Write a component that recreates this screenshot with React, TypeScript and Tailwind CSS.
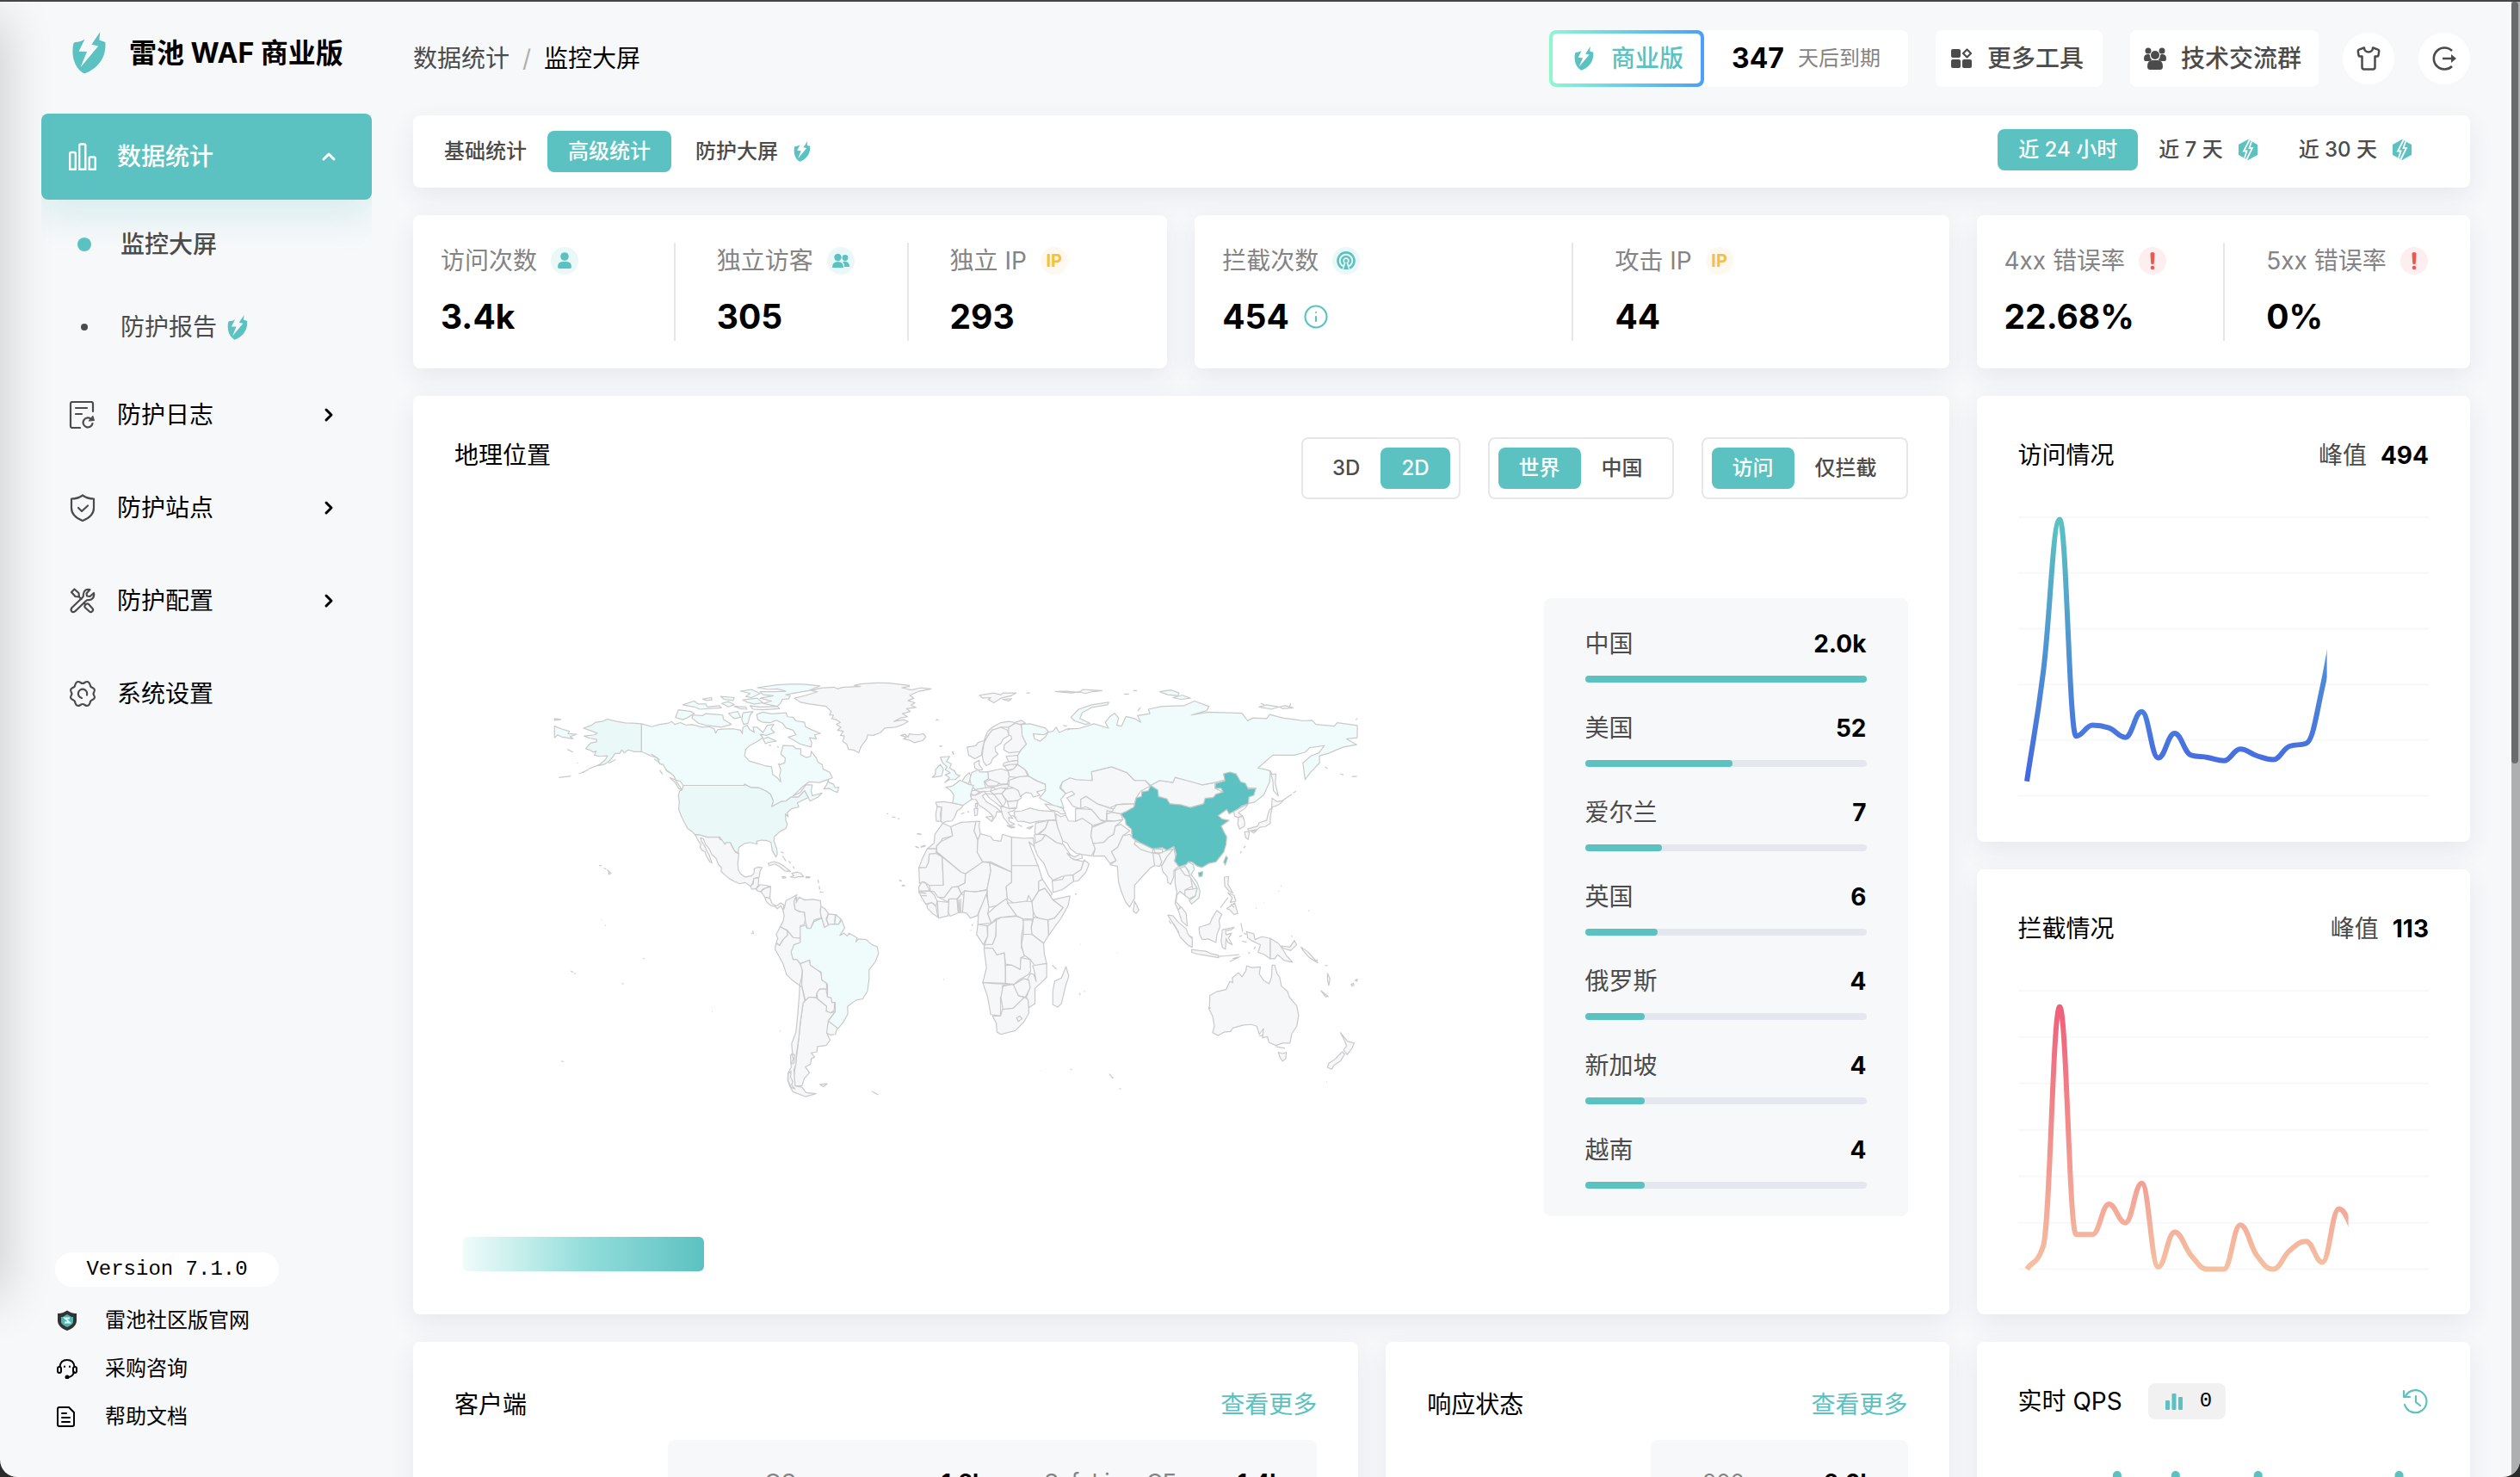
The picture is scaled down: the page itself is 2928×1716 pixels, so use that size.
import { ReactNode, useId } from "react";
import clsx from "clsx";
import { ChevronRight, ChevronUp, Info, Shirt } from "lucide-react";

const COUNTRIES = [
  { name: "中国", value: "2.0k", percent: 100 },
  { name: "美国", value: "52", percent: 52.3 },
  { name: "爱尔兰", value: "7", percent: 27.5 },
  { name: "英国", value: "6", percent: 25.7 },
  { name: "俄罗斯", value: "4", percent: 21.4 },
  { name: "新加坡", value: "4", percent: 21.4 },
  { name: "越南", value: "4", percent: 21.4 },
];

const VISITS = [26, 222, 496, 107, 127, 122, 105, 151, 68, 112, 73, 69, 63, 84, 72, 65, 89, 94, 195, 360];
const BLOCKS = [0, 10, 113, 15, 15, 28, 20, 37, 1, 16, 6, 0, 0, 19, 6, 0, 8, 12, 3, 26, 15];

export default function App() {
  return (
    <div className="relative h-screen overflow-hidden border-t-2 border-[#454545] bg-[#2b2b2b] font-['Inter','Noto_Sans_CJK_SC',sans-serif] text-[28px] leading-[42px] text-black">
      <div className="relative flex h-full overflow-hidden rounded-b-[20px] bg-[#f7f8fa]">
        <Sidebar />
        <main className="min-w-0 flex-1 pr-[58px]">
          <Header />
          <FilterBar />
          <Dashboard />
        </main>
        <div className="pointer-events-none absolute top-5 bottom-[210px] -left-10 w-10 shadow-[0_0_60px_rgba(0,0,0,0.24)]" />
        <div className="absolute inset-y-0 right-0 w-[10px] bg-[#afafaf]">
          <div className="h-[885px] w-2 rounded-full bg-[#6b6b6b]" />
        </div>
      </div>
    </div>
  );
}

function Sidebar() {
  return (
    <aside className="flex w-[480px] shrink-0 flex-col px-12">
      <div className="flex h-[130px] items-start gap-[27px] pt-[35px] pl-9">
        <Logo className="h-[49px] w-[39px]" />
        <h1 className="text-[32px] leading-[50px] font-bold whitespace-nowrap">雷池 WAF 商业版</h1>
      </div>
      <nav className="flex flex-col">
        <div className="overflow-hidden pb-1">
          <button className="flex h-[100px] w-full items-center rounded-lg bg-[#5bc2c1] pr-[38px] pl-8 font-medium text-white shadow-[0_20px_40px_rgba(91,194,193,0.2)]">
            <BarsIcon className="h-8 w-8" />
            <span className="ml-6">数据统计</span>
            <ChevronUp className="ml-auto h-6 w-6" strokeWidth={3} />
          </button>
          <ul className="pt-1 text-[#4b4b4b]">
            <li className="flex h-24 items-center">
              <span className="ml-[42px] h-4 w-4 rounded-full bg-[#5bc2c1]" />
              <a href="#screen" className="ml-[34px] font-medium">
                监控大屏
              </a>
            </li>
            <li className="flex h-24 items-center">
              <span className="ml-[46px] h-2 w-2 rounded-full bg-[#4b4b4b]" />
              <a href="#report" className="ml-[38px]">
                防护报告
              </a>
              <Logo className="ml-3 h-[29px] w-6" />
            </li>
          </ul>
        </div>
        <NavItem icon={<LogIcon />} label="防护日志" />
        <NavItem icon={<ShieldIcon />} label="防护站点" />
        <NavItem icon={<ConfigIcon />} label="防护配置" />
        <NavItem icon={<GearIcon />} label="系统设置" leaf />
      </nav>
      <div className="mt-auto mb-[42px] px-4">
        <div className="w-[260px] rounded-full bg-white text-center font-['Liberation_Mono','Noto_Sans_CJK_SC',monospace] text-2xl leading-10">
          Version 7.1.0
        </div>
        <ul className="mt-[11px] text-2xl">
          <FootLink icon={<BadgeIcon />} label="雷池社区版官网" />
          <FootLink icon={<HeadsetIcon />} label="采购咨询" />
          <FootLink icon={<DocIcon />} label="帮助文档" />
        </ul>
      </div>
    </aside>
  );
}

function NavItem({ icon, label, leaf }: { icon: ReactNode; label: string; leaf?: boolean }) {
  return (
    <button className="mb-2 flex h-[100px] items-center pr-[38px] pl-8">
      <span className="text-[#4b4b4b]">{icon}</span>
      <span className="ml-6">{label}</span>
      {!leaf && <ChevronRight className="ml-auto h-6 w-6" strokeWidth={3} />}
    </button>
  );
}

function FootLink({ icon, label }: { icon: ReactNode; label: string }) {
  return (
    <li>
      <a href="#link" className="flex h-14 items-center gap-8 pl-[2px]">
        {icon}
        {label}
      </a>
    </li>
  );
}

function Header() {
  return (
    <header className="flex h-[132px] items-center justify-between">
      <div className="flex gap-[15px]">
        <a href="#stats" className="text-[#4b4b4b]">
          数据统计
        </a>
        <span className="text-[#b0b0b0]">/</span>
        <span>监控大屏</span>
      </div>
      <div className="flex items-center gap-8">
        <div className="flex h-[66px] items-center rounded-lg bg-white">
          <div className="h-full rounded-lg bg-gradient-to-r from-[#8ff7cf] to-[#4b9ffa] p-1">
            <div className="flex h-full items-center gap-5 rounded-[5px] bg-white px-5 pl-[25px] font-medium text-[#5bc2c1]">
              <Logo className="h-7 w-[23px]" />
              商业版
            </div>
          </div>
          <b className="ml-8 text-[32px]">347</b>
          <span className="mr-8 ml-4 text-2xl text-[#848484]">天后到期</span>
        </div>
        <button className="flex h-[66px] items-center gap-[18px] rounded-lg bg-white pr-[22px] pl-[18px] font-medium text-[#4b4b4b]">
          <ToolsIcon />
          更多工具
        </button>
        <div className="flex items-center gap-7">
          <button className="flex h-[66px] items-center gap-[17px] rounded-lg bg-white pr-5 pl-4 font-medium text-[#4b4b4b]">
            <GroupIcon />
            技术交流群
          </button>
          <button aria-label="主题" className="grid h-[60px] w-[60px] place-items-center rounded-full bg-white text-[#4b4b4b]">
            <Shirt className="h-[30px] w-[30px]" strokeWidth={2} />
          </button>
          <button aria-label="退出" className="grid h-[60px] w-[60px] place-items-center rounded-full bg-white text-[#4b4b4b]">
            <svg viewBox="0 0 30 30" className="h-[30px] w-[30px]" fill="none" stroke="currentColor" strokeWidth="2.600">
              <path d="M24 6A12.500 12.500 0 1 0 24 24" />
              <path d="M13 15h13" />
              <path d="M23 10l6 5-6 5z" fill="currentColor" stroke="none" />
            </svg>
          </button>
        </div>
      </div>
    </header>
  );
}

function Card({ className, children }: { className?: string; children: ReactNode }) {
  return (
    <section className={clsx("rounded-lg bg-white shadow-[0_10px_30px_rgba(30,50,90,0.08)]", className)}>{children}</section>
  );
}

function Tab({ active, children }: { active?: boolean; children: ReactNode }) {
  return (
    <button
      className={clsx(
        "flex h-12 items-center gap-[18px] rounded-lg px-6 text-2xl font-medium",
        active ? "bg-[#5bc2c1] text-white" : "text-[#4b4b4b]"
      )}
    >
      {children}
    </button>
  );
}

function FilterBar() {
  return (
    <Card className="mb-8 flex h-[84px] items-center justify-between pr-11 pl-3">
      <div className="flex">
        <Tab>基础统计</Tab>
        <Tab active>高级统计</Tab>
        <div className="ml-1">
          <Tab>
            防护大屏
            <Logo className="h-6 w-5" />
          </Tab>
        </div>
      </div>
      <div className="flex pb-1">
        <Tab active>近 24 小时</Tab>
        <Tab>
          近 7 天<HexIcon />
        </Tab>
        <Tab>
          近 30 天<HexIcon />
        </Tab>
      </div>
    </Card>
  );
}

function Stat({ label, value, icon, extra, first }: { label: string; value: string; icon: ReactNode; extra?: ReactNode; first?: boolean }) {
  return (
    <div className={clsx(!first && "border-l-2 border-[#e6e7eb] pl-12")}>
      <div className="flex items-center gap-4 whitespace-nowrap text-[#848484]">
        {label}
        {icon}
      </div>
      <div className="mt-4 flex items-center gap-4 text-[39px] leading-14 font-bold">
        {value}
        {extra}
      </div>
    </div>
  );
}

function Dashboard() {
  return (
    <div className="grid grid-cols-12 gap-8">
      <div className="col-span-9 grid grid-cols-2 gap-8">
        <Card className="grid grid-cols-3 p-8">
          <Stat first label="访问次数" value="3.4k" icon={<UserBadge />} />
          <Stat label="独立访客" value="305" icon={<UsersBadge />} />
          <Stat label="独立 IP" value="293" icon={<IpBadge />} />
        </Card>
        <Card className="grid grid-cols-2 p-8">
          <Stat first label="拦截次数" value="454" icon={<TargetBadge />} extra={<Info className="h-[30px] w-[30px] text-[#5bc2c1]" strokeWidth={1.7} />} />
          <Stat label="攻击 IP" value="44" icon={<IpBadge />} />
        </Card>
      </div>
      <Card className="col-span-3 grid grid-cols-2 p-8">
        <Stat first label="4xx 错误率" value="22.68%" icon={<AlertBadge />} />
        <Stat label="5xx 错误率" value="0%" icon={<AlertBadge />} />
      </Card>

      <GeoCard />
      <div className="col-span-3 flex flex-col gap-8">
        <TrendCard title="访问情况" peak="494" data={VISITS} max={500} lines={5} reveal={359} colors={["#5bc3c1", "#4361e6"]} />
        <TrendCard title="拦截情况" peak="113" data={BLOCKS} max={120} lines={6} reveal={384} colors={["#ee5a78", "#f5c0a2"]} />
      </div>

      <div className="col-span-9 grid grid-cols-[1098fr_654fr] gap-8">
        <Card className="px-12 pt-[52px]">
          <CardHead title="客户端" />
          <div className="mt-5 ml-[248px] grid grid-cols-[329fr_297fr] gap-12 rounded-lg bg-[#f7f8fa] px-10 pt-7 whitespace-nowrap">
            <Row name="macOS" value="1.2k" />
            <Row name="SafeLine-CE" value="1.4k" />
          </div>
        </Card>
        <Card className="px-12 pt-[52px]">
          <CardHead title="响应状态" />
          <div className="mt-5 ml-[260px] rounded-lg bg-[#f7f8fa] px-10 pt-7">
            <Row name="200" value="2.0k" />
          </div>
        </Card>
      </div>
      <Card className="col-span-3 px-12 pt-12">
        <div className="flex items-center">
          <h2>实时 QPS</h2>
          <div className="ml-[30px] flex h-[42px] items-center gap-5 rounded-lg bg-[#f1f1f1] px-4 pl-5 font-['Liberation_Mono','Noto_Sans_CJK_SC',monospace] text-2xl">
            <svg viewBox="0 0 20 20" className="h-5 w-5" fill="#5bc2c1">
              <rect x="0" y="9" width="5" height="11" rx="1" />
              <rect x="7.500" y="1" width="5" height="19" rx="1" />
              <rect x="15" y="5" width="5" height="15" rx="1" />
            </svg>
            0
          </div>
          <button aria-label="历史" className="ml-auto text-[#5bc2c1]">
            <HistoryIcon />
          </button>
        </div>
        <svg viewBox="0 0 478 120" className="mt-[60px] w-full" fill="#5bc2c1">
          {[110, 178, 274, 438].map((x) => (
            <rect key={x} x={x} y="0" width="10" height="120" rx="5" />
          ))}
        </svg>
      </Card>
    </div>
  );
}

function CardHead({ title }: { title: string }) {
  return (
    <div className="flex justify-between">
      <h2>{title}</h2>
      <a href="#more" className="text-[#5bc2c1]">
        查看更多
      </a>
    </div>
  );
}

function Row({ name, value }: { name: string; value: string }) {
  return (
    <div className="flex items-center text-[26px]">
      <span className="mr-3 h-2 w-2 rounded-full bg-[#5bc2c1]" />
      <span className="text-[#848484]">{name}</span>
      <b className="ml-auto">{value}</b>
    </div>
  );
}

function Toggle({ options, active }: { options: string[]; active: string }) {
  return (
    <div className="flex rounded-lg border-2 border-[#e5e7ed] p-[10px]">
      {options.map((option) => (
        <Tab key={option} active={option === active}>
          {option}
        </Tab>
      ))}
    </div>
  );
}

function GeoCard() {
  return (
    <Card className="col-span-9 flex flex-col px-12 pt-12">
      <div className="flex items-start justify-between">
        <h2>地理位置</h2>
        <div className="flex gap-8">
          <Toggle options={["3D", "2D"]} active="2D" />
          <Toggle options={["世界", "中国"]} active="世界" />
          <Toggle options={["访问", "仅拦截"]} active="访问" />
        </div>
      </div>
      <div className="flex flex-1 items-stretch gap-[100px]">
        <div className="relative flex flex-1 items-center">
          <WorldMap />
          <div className="absolute bottom-[50px] left-[10px] h-10 w-[280px] rounded-md bg-gradient-to-r from-[#effcfb] via-[#93dedb] to-[#5bc2c1]" />
        </div>
        <ul className="flex w-[423px] flex-col gap-8 self-center rounded-lg bg-[#f7f8fa] px-12 py-8">
          {COUNTRIES.map(({ name, value, percent }) => (
            <li key={name}>
              <div className="flex justify-between">
                <span className="text-[#4b4b4b]">{name}</span>
                <b>{value}</b>
              </div>
              <div className="mt-4 h-2 rounded-full bg-[#e4e7ed]">
                <div className="h-2 rounded-full bg-[#5bc2c1]" style={{ width: `${percent}%` }} />
              </div>
            </li>
          ))}
        </ul>
      </div>
    </Card>
  );
}

// monotone cubic through evenly spaced points
function smoothPath(points: number[][]) {
  const slopes = points.slice(1).map(([x, y], i) => (y - points[i][1]) / (x - points[i][0]));
  const tangents = points.map((_, i) => {
    const a = slopes[i - 1] ?? slopes[i];
    const b = slopes[i] ?? a;
    if (a * b <= 0) return 0;
    const steepest = 2 * Math.min(Math.abs(a), Math.abs(b));
    return Math.sign(a) * Math.min(Math.abs(a + b) / 2, steepest);
  });
  return points.reduce((d, [x, y], i) => {
    if (i === 0) return `M${x},${y}`;
    const [px, py] = points[i - 1];
    const h = (x - px) * 0.42;
    return `${d}C${px + h},${py + tangents[i - 1] * h} ${x - h},${y - tangents[i] * h} ${x},${y}`;
  }, "");
}

type TrendProps = {
  title: string;
  peak: string;
  data: number[];
  max: number;
  lines: number;
  reveal: number;
  colors: string[];
};

function TrendCard({ title, peak, data, max, lines, reveal, colors }: TrendProps) {
  const id = useId();
  const points = data.map((v, i) => [10 + i * 19.1, 375 - (v / max) * 324]);

  return (
    <Card className="p-12">
      <div className="flex">
        <h2 className="mr-auto">{title}</h2>
        <span className="text-[#4b4b4b]">峰值</span>
        <b className="ml-4">{peak}</b>
      </div>
      <svg viewBox="0 0 478 380" className="w-full">
        <defs>
          <linearGradient id={`${id}g`} gradientUnits="userSpaceOnUse" x1="0" y1="51" x2="0" y2="375">
            <stop stopColor={colors[0]} />
            <stop offset="1" stopColor={colors[1]} />
          </linearGradient>
          <clipPath id={`${id}c`}>
            <rect width={reveal} height="380" />
          </clipPath>
        </defs>
        {Array.from({ length: lines + 1 }, (_, i) => (
          <path key={i} d={`M0 ${51 + (i * 324) / lines}h478`} stroke="#f7f8fa" strokeWidth="2" />
        ))}
        <path d={smoothPath(points)} fill="none" stroke={`url(#${id}g)`} strokeWidth="6" clipPath={`url(#${id}c)`} />
      </svg>
    </Card>
  );
}

/* ---------- map ---------- */

const WEST_PLAIN = [
  // Mexico, Central America, Caribbean
  "M562,590L580,592 608,600 645,598 650,608 660,610 667,624 672,618 686,618 692,632 704,652 716,656 712,690 714,712 722,726 738,737 760,733 768,725 770,708 782,703 797,704 790,716 787,738 768,742 766,752 758,770 738,756 718,760 700,752 682,742 668,730 654,718 655,704 645,695 636,672 622,660 612,640 600,625 592,606 582,602 586,614 595,628 602,642 612,660 618,678 622,688 614,684 602,664 598,650 588,645 580,634 584,624 574,612 566,596Z",
  "M768,742L785,740 784,764 776,778 760,778 757,768 766,760Z",
  "M776,778L790,763 812,766 826,770 800,778 792,788 780,784Z",
  "M792,788L806,776 827,770 824,810 806,806 798,794Z",
  "M806,806L824,810 832,828 846,836 862,826 874,834 870,850 862,836 850,846 842,838 828,836 812,822Z",
  "M818,690L838,684 858,690 876,702 896,718 876,716 862,704 842,692 822,698Z",
  "M900,724L920,720 932,724 942,736 922,736 912,740 896,736 908,732Z",
  "M866,736L876,735 880,739 870,741Z",
  "M950,736L964,737 960,740 950,740Z",
  // South America
  "M875,842L880,818 900,808 918,798 908,820 912,848 926,856 945,858 948,880 944,900 930,905 934,930 928,948 905,945 885,920 860,908 870,890 874,870 870,852Z",
  "M908,820L918,806 916,826 926,806 945,816 975,814 1000,818 1002,836 1000,850 1002,870 1005,878 985,882 978,885 966,914 954,912 948,890 945,858 930,856 912,848Z",
  "M1002,838L1015,845 1028,862 1020,882 1030,905 1014,910 1005,880 1000,860Z",
  "M1028,864L1052,866 1050,898 1030,902 1022,885Z",
  "M860,908L885,922 885,938 870,952 858,972 846,962 852,948 846,935Z",
  "M885,922L905,945 930,948 930,965 910,970 900,995 905,1020 918,1020 930,1035 938,1050 935,1080 928,1110 905,1094 882,1072 870,1035 855,1008 842,985 845,966 858,972 870,952 885,938Z",
  "M930,1035L960,1022 968,1042 985,1052 1003,1068 1005,1090 1022,1102 1022,1122 998,1122 988,1136 985,1152 960,1150 948,1162 940,1130 935,1108 938,1060Z",
  "M988,1136L998,1122 1020,1122 1025,1150 1038,1152 1050,1172 1048,1196 1036,1204 1020,1198 1022,1182 990,1156Z",
  "M1028,1230L1045,1242 1060,1256 1052,1278 1036,1280 1020,1272Z",
  "M948,1162L960,1150 985,1152 1022,1182 1020,1198 1036,1204 1052,1200 1028,1230 1022,1272 1034,1298 1020,1316 990,1320 988,1338 968,1342 980,1356 968,1362 966,1380 948,1390 962,1410 944,1430 936,1455 912,1455 908,1420 918,1350 925,1290 930,1240 940,1170Z",
  "M928,1110L936,1116 946,1162 940,1170 930,1240 925,1290 916,1350 915,1380 908,1400 912,1455 936,1460 950,1478 985,1482 948,1492 905,1476 894,1458 886,1435 888,1410 898,1392 896,1350 903,1345 900,1310 915,1270 922,1200 926,1150Z",
  "M900,1345L910,1348 908,1378 898,1380 906,1362Z",
  "M888,1412L898,1405 896,1425 904,1440 900,1452 912,1466 898,1460 888,1438Z",
  // Greenland and Iceland
  "M1310,78L1240,70 1200,69 1140,73 1118,78 1140,82 1080,84 1060,90 1048,84 1000,87 968,96 990,100 950,112 910,122 930,136 962,142 1020,150 1038,168 1032,180 1046,180 1040,192 1055,196 1070,205 1056,212 1072,222 1060,232 1080,236 1070,250 1084,252 1078,270 1092,280 1098,298 1116,300 1134,310 1142,288 1162,262 1165,248 1184,250 1210,240 1225,225 1262,222 1290,212 1306,202 1292,196 1256,202 1280,190 1304,186 1286,175 1314,168 1300,158 1334,154 1316,146 1330,138 1306,130 1326,122 1312,112 1345,98 1386,90 1350,86 1318,94 1284,86 1310,82Z",
  "M1280,250L1300,256 1290,262 1310,266 1328,275 1356,268 1368,256 1360,244 1340,248 1310,245 1306,256 1296,246Z",
  "M998,1450L1024,1448 1010,1458Z",
];

const WEST_LIGHT = [
  // Canada
  "M376,210L412,220 440,212 470,208 482,202 492,212 512,206 530,214 555,213 588,222 612,220 630,228 635,242 642,230 668,228 700,228 722,232 728,244 730,222 745,215 752,228 770,240 765,222 780,222 800,240 815,215 838,212 828,228 840,240 812,250 790,246 800,258 775,274 752,286 740,298 736,320 752,338 780,346 806,354 830,358 834,384 850,396 862,410 858,388 862,368 856,352 876,344 878,328 862,314 870,285 905,286 916,296 932,296 932,316 950,326 966,322 968,305 985,326 992,342 1006,350 1010,366 1032,376 1042,396 1020,404 998,412 960,410 940,425 905,458 930,446 950,420 972,420 968,440 972,458 1006,448 992,462 964,476 958,464 945,440 924,462 898,462 880,476 862,478 830,495 836,475 826,452 812,442 785,430 760,430 735,418 735,422 522,422 512,408 496,404 490,390 478,380 464,372 452,350 440,348 430,326 412,322 400,316 376,306Z",
  "M1028,402L1022,420 1012,434 1032,432 1048,442 1060,446 1064,428 1052,430 1046,418 1030,412Z",
  "M476,396L494,402 518,438 506,432 494,412Z",
  // Arctic archipelago
  "M998,80L940,74 890,74 850,76 780,86 820,92 850,90 880,98 840,100 790,100 800,110 836,114 790,122 830,132 800,140 850,150 862,138 868,126 890,124 895,114 880,110 908,105 960,96Z",
  "M722,98L760,92 790,106 760,120 740,116 755,106Z",
  "M730,128L780,122 800,138 770,142 745,136Z",
  "M755,148L790,152 850,150 858,158 800,162 765,160Z",
  "M555,180L590,182 600,175 640,178 660,180 662,195 690,212 655,222 600,215 575,208 552,190Z",
  "M505,162L550,168 560,175 535,190 520,196 495,188Z",
  "M778,178L800,170 830,176 880,172 886,186 905,188 915,200 945,205 948,220 968,230 1000,243 980,248 986,262 962,258 970,275 968,290 930,280 900,262 888,256 915,248 905,232 880,224 868,208 846,198 826,206 800,205 782,196Z",
  "M520,145L560,132 574,142 600,142 606,152 648,148 655,155 580,160 560,152Z",
  "M590,125L620,120 622,128 604,130Z",
  "M652,116L700,120 696,130 664,126Z",
  "M656,140L680,134 700,144 680,152Z",
  "M680,174L712,168 722,188 700,192 690,184Z",
  "M730,172L765,168 755,180 748,208 732,212 726,195Z",
  "M700,150L740,152 744,160 720,158Z",
  "M800,262L818,256 846,270 820,274 808,278Z",
  // French Guiana, Brazil
  "M1054,866L1072,882 1064,900 1050,898Z",
  "M930,908L948,903 954,914 966,914 978,890 1005,878 1014,910 1032,900 1064,900 1074,884 1085,912 1068,938 1082,930 1094,940 1100,930 1128,946 1124,960 1132,950 1160,952 1180,970 1198,976 1203,1000 1192,1028 1170,1056 1170,1090 1164,1130 1148,1156 1125,1160 1095,1182 1096,1208 1080,1236 1062,1258 1028,1232 1052,1200 1052,1168 1040,1168 1038,1152 1025,1150 1025,1105 1005,1090 1003,1064 985,1054 965,1040 963,1022 930,1035 918,1020 905,1020 898,995 908,970 930,962Z",
  // Chukotka past the date line
  "M73,218L98,228 125,236 120,244 150,246 128,254 138,262 100,256 84,248 73,258Z",
  "M73,192L95,195 73,198Z",
];

const USA = [
  "M376,210L345,208 320,207 290,202 257,194 240,202 216,205 200,216 174,225 205,236 222,242 212,248 176,252 196,260 220,264 220,272 200,276 186,290 182,296 200,302 208,308 218,304 212,318 230,322 258,320 250,334 230,350 192,365 222,354 246,350 262,340 276,324 284,312 300,312 308,300 316,310 330,300 352,306 376,306Z",
  "M522,422L735,422 735,418 760,430 785,430 812,442 826,452 836,475 830,495 862,478 880,476 898,462 924,462 945,440 958,464 944,470 920,482 925,496 900,502 884,516 888,530 878,520 880,545 885,555 880,570 860,580 840,598 838,612 848,640 850,658 845,668 832,645 828,618 815,612 795,610 778,614 780,624 755,618 735,622 716,635 713,656 700,645 686,618 672,618 667,624 650,600 608,600 580,592 562,590 554,582 537,570 524,546 512,520 506,505 508,480 505,455 510,440 518,438Z",
  "M262,716L270,724 262,728Z",
];

const EAST_PLAIN = [
  // Nordics
  "M235,290L262,286 272,274 290,268 302,236 320,220 345,206 372,202 390,206 412,198 425,208 408,212 392,208 370,222 345,222 330,230 316,232 300,256 290,275 284,300 282,318 260,330 240,318Z",
  "M316,232L345,222 366,232 372,250 352,262 346,276 326,290 328,305 336,314 318,330 312,346 298,354 288,340 284,318 290,275 300,256Z",
  "M370,222L392,208 410,214 416,235 414,250 428,280 405,306 372,310 355,300 356,282 380,262 378,252 370,248Z",
  "M258,345L275,335 274,350 286,368 272,370 260,362Z",
  // Central and eastern Europe
  "M362,322L400,318 404,336 370,340Z",
  "M355,345L370,340 404,336 398,350 370,358 352,354Z",
  "M356,355L376,350 398,350 386,366 366,370Z",
  "M368,372L386,366 400,350 424,368 432,388 410,396 372,392Z",
  "M303,375L345,365 368,372 372,392 366,416 345,418 320,408 303,398Z",
  "M293,410L310,402 340,414 330,424 302,424Z",
  "M260,436L296,430 318,428 310,442 280,444 262,442Z",
  "M318,428L345,420 372,418 366,430 345,432 330,436Z",
  "M310,442L345,430 362,434 348,450 322,452Z",
  "M228,392L242,378 248,392 240,416 218,408Z",
  "M246,442L262,438 276,444 262,456 246,452Z",
  "M246,456L262,456 290,442 296,450 284,458 298,478 330,498 348,515 332,512 328,528 318,542 316,524 300,508 274,490 264,470 250,470Z",
  "M296,530L320,528 316,546Z",
  "M258,502L270,500 268,524 260,526Z",
  "M262,484L268,482 268,498 262,496Z",
  "M296,450L322,452 340,462 350,490 344,496 326,480 308,466Z",
  "M322,452L348,450 362,476 352,495 342,480Z",
  "M348,450L362,434 392,430 408,448 412,464 400,474 368,478 358,465Z",
  "M366,478L400,474 396,498 372,502Z",
  "M344,496L354,495 372,502 396,500 384,510 368,514 384,536 370,532 372,545 390,556 374,560 352,530Z",
  "M372,404L405,392 436,390 462,406 490,418 490,436 462,444 472,456 450,462 444,450 428,446 408,460 402,440 385,430 370,424Z",
  "M133,480L160,478 192,484 222,490 216,500 202,510 195,530 186,544 166,546 156,552 150,545 152,497 138,495Z",
  "M138,495L152,497 148,520 150,545 135,545 133,520Z",
  "M388,512L412,510 440,500 470,508 520,512 524,540 500,542 462,546 440,552 420,546 400,545 390,532Z",
  "M430,568L450,562 438,572Z",
  "M365,560L390,566 380,568Z",
  // Caucasus, Middle East
  "M488,486L520,490 546,500 556,520 540,520 530,512 505,506Z",
  "M458,552L500,542 490,570 462,592 455,585Z",
  "M500,542L524,542 530,566 548,600 545,625 525,618 490,592 470,590 490,570Z",
  "M454,592L470,590 490,592 478,610 458,622Z",
  "M450,624L478,610 490,592 525,618 548,625 568,655 580,676 614,684 606,712 580,730 545,735 514,748 500,730 485,690 465,665Z",
  "M512,750L545,745 552,732 580,730 582,752 545,780 515,790Z",
  "M580,730L606,712 616,678 632,692 622,720 596,750 582,752Z",
  "M560,655L585,668 608,655 610,672 590,678 574,672Z",
  "M524,520L540,530 556,524 565,544 588,545 608,534 640,546 642,566 638,595 652,640 640,664 612,660 590,655 572,640 560,620 546,612 530,566 525,540Z",
  // Central and South Asia
  "M540,430L545,410 570,396 590,402 642,405 640,375 705,358 755,378 780,405 815,405 830,424 800,442 785,465 780,485 740,486 722,488 700,500 660,486 622,460 605,470 605,502 580,494 560,465 585,452 576,442 556,450Z",
  "M605,470L622,460 660,486 700,500 720,505 708,514 690,508 688,545 668,540 640,505 620,495 605,502Z",
  "M588,502L605,502 640,505 668,540 682,548 645,560 610,535 588,545Z",
  "M722,488L780,485 782,498 735,520 705,514Z",
  "M690,520L705,514 735,520 742,540 715,545 690,542Z",
  "M642,566L690,545 712,545 742,540 718,562 712,590 694,602 680,618 645,622 638,595Z",
  "M645,622L680,618 694,602 712,590 718,562 735,556 765,578 742,595 725,635 705,650 720,680 700,690 682,664 645,665 652,640Z",
  "M742,595L765,590 785,614 780,624 836,652 862,655 885,645 910,640 900,660 885,668 868,700 862,685 845,698 832,705 806,735 780,765 780,810 764,840 752,825 738,790 728,755 724,700 700,695 720,680 705,650 725,635Z",
  "M782,614L800,620 840,640 838,655 800,642 780,624Z",
  "M842,640L872,642 870,654 848,654Z",
  "M840,654L860,658 868,685 862,700 845,698Z",
  "M780,820L794,850 786,862 776,855Z",
  "M885,668L908,638 912,660 924,700 908,715 908,735 898,762 888,755 886,735 872,718 868,700Z",
  "M912,715L928,706 938,720 962,735 970,768 946,780 944,800 928,786 918,800 915,822 930,840 922,850 912,828 918,790 912,760Z",
  "M922,850L932,840 948,862 952,905 934,890Z",
  "M928,706L946,700 956,720 984,776 970,782 962,735 944,730Z",
  "M944,782L984,776 978,802 958,812 944,800Z",
  "M832,422L862,405 905,412 912,394 940,402 985,412 1000,420 1042,412 1042,432 1068,445 1032,465 1010,468 1005,485 962,498 895,485 858,460 852,435Z",
  // Korea, Japan
  "M1102,510L1122,500 1150,485 1140,500 1118,516 1132,528 1118,532 1106,528Z",
  "M1118,532L1132,528 1138,545 1138,562 1122,572 1116,556Z",
  "M1220,505L1228,498 1222,530 1222,552 1205,564 1190,565 1178,574 1152,578 1148,572 1180,562 1186,550 1210,542 1214,522Z",
  "M1226,496L1228,466 1244,478 1264,474 1250,488 1236,494Z",
  "M1138,582L1154,580 1150,608 1142,602Z",
  "M1160,580L1178,576 1168,586Z",
  // Southeast Asia, Oceania
  "M888,868L905,870 920,890 948,915 955,935 968,950 968,978 955,972 930,945 915,912 905,895Z",
  "M966,986L990,990 1012,992 1028,1000 1052,1006 1054,1014 1010,1006 985,1002 966,996Z",
  "M990,910L1004,905 1025,898 1032,880 1048,852 1064,866 1055,885 1058,908 1048,935 1045,962 1020,950 1000,952 992,935Z",
  "M1066,918L1104,910 1096,918 1076,922 1078,936 1096,930 1086,946 1098,970 1084,962 1078,948 1076,985 1066,978 1062,958Z",
  "M1072,738L1086,735 1084,762 1100,792 1088,786 1074,768Z",
  "M1080,846L1106,826 1116,862 1104,866 1090,850Z",
  "M1084,792L1104,800 1110,820 1092,824 1098,808Z",
  "M1145,925L1168,932 1172,952 1195,942 1222,948 1222,1018 1200,1002 1182,996 1190,970 1160,955 1148,945Z",
  "M1222,948L1248,965 1262,985 1275,1008 1294,1030 1268,1024 1246,1004 1236,1018 1222,1018Z",
  "M1258,974L1286,978 1300,955 1308,970 1288,990 1264,982Z",
  "M1322,978L1345,995 1376,1032 1350,1015 1330,992Z",
  "M1387,1128L1410,1148 1402,1148Z",
  "M1408,1068L1416,1088 1412,1110 1408,1090Z",
  "M1485,1106L1492,1102 1494,1108 1488,1112Z",
  "M1498,1092L1505,1088 1504,1096Z",
  "M1025,1145L1045,1132 1078,1124 1090,1096 1100,1100 1098,1084 1118,1066 1130,1080 1142,1060 1145,1042 1160,1048 1190,1046 1186,1070 1200,1092 1218,1104 1226,1080 1228,1040 1236,1040 1244,1070 1252,1080 1258,1112 1278,1130 1284,1150 1308,1180 1314,1212 1308,1250 1292,1275 1286,1308 1262,1308 1240,1316 1218,1306 1212,1286 1196,1290 1200,1258 1186,1278 1178,1250 1160,1244 1135,1246 1100,1256 1092,1268 1072,1270 1052,1282 1034,1272 1040,1250 1034,1215 1022,1190 1024,1180Z",
  "M1248,1340L1262,1344 1274,1340 1272,1362 1262,1370 1254,1358Z",
  "M1450,1272L1464,1290 1474,1302 1495,1308 1488,1326 1472,1348 1460,1332 1470,1318 1464,1300Z",
  "M1456,1338L1464,1346 1450,1370 1428,1385 1422,1398 1408,1392 1412,1378 1434,1362Z",
  "M275,112L320,104 345,110 352,104 395,104 378,114 345,122 322,138 304,126 312,120 285,122Z",
  "M350,126L380,124 370,132Z",
  "M522,99L560,98 600,102 612,92 640,94 674,96 640,100 620,106 600,100 575,104Z",
  // Africa
  "M156,552L182,564 188,595 155,605 150,615 136,630 136,640 105,640 128,620 130,590Z",
  "M105,640L136,640 134,656 112,658 110,685 102,704 78,705 90,672Z",
  "M182,564L215,549 264,546 258,578 270,610 268,652 286,685 230,726 215,720 136,650 136,630 150,615 188,595Z",
  "M264,546L276,545 274,562 278,588 270,610 258,578Z",
  "M278,588L312,598 320,610 345,614 350,590 380,600 380,720 312,685 286,685 268,652 270,610Z",
  "M380,600L420,604 450,602 454,632 436,616 448,650 466,698 380,698Z",
  "M78,705L102,704 110,685 112,658 134,656 154,668 158,765 112,766 96,754 80,758Z",
  "M134,650L215,720 230,726 228,758 205,770 186,772 160,808 140,806 128,788 116,785 112,766 158,765 154,668Z",
  "M230,726L286,685 308,688 312,715 300,780 262,788 226,785 216,795 205,770 228,758Z",
  "M308,688L380,720 380,755 362,770 366,812 330,836 304,842 300,780 312,715Z",
  "M380,698L466,698 480,745 468,752 468,785 446,822 435,800 430,820 385,826 366,812 362,770 380,755Z",
  "M468,752L480,745 512,795 506,802 488,776 468,785Z",
  "M446,822L468,785 488,776 506,802 514,815 548,842 520,878 482,888 456,870 446,845Z",
  "M514,815L570,802 564,835 540,880 500,938 498,885 520,878 548,842Z",
  "M78,770L88,754 100,758 114,785 78,785Z",
  "M78,788L114,785 128,798 138,820 134,838 120,825 100,830 88,808Z",
  "M104,832L120,825 134,838 140,875 122,862 106,845Z",
  "M138,820L176,824 174,870 142,878Z",
  "M176,812L202,812 206,860 180,872 174,860Z",
  "M140,806L160,808 186,772 205,770 216,795 202,812 176,812 172,822Z",
  "M204,812L216,795 226,800 220,858 208,860Z",
  "M226,785L262,788 300,782 298,810 280,840 268,870 245,878 234,862 220,858Z",
  "M298,795L306,842 302,862 314,896 270,900 272,862Z",
  "M302,862L330,836 362,812 376,840 396,870 345,876 330,880 314,896Z",
  "M366,826L385,826 430,820 446,822 450,858 450,882 415,880 396,870 376,840Z",
  "M330,885L345,876 396,872 415,880 420,895 412,940 412,980 424,1008 410,1014 408,1055 380,1040 360,1036 356,998 332,1005 318,982 290,980 292,970 318,968 328,940Z",
  "M270,900L300,905 302,940 288,970 266,935Z",
  "M302,905L330,885 328,940 318,968 292,970 302,940Z",
  "M418,885L448,885 444,910 446,934 418,934Z",
  "M452,875L498,885 500,938 484,965 446,934 444,910Z",
  "M418,934L446,934 484,965 486,1000 494,1034 456,1042 440,1020 420,1005 412,970Z",
  "M290,982L318,982 332,1005 356,998 360,1050 360,1102 286,1100 298,1050Z",
  "M360,1040L380,1040 408,1055 410,1014 440,1020 442,1060 435,1072 405,1090 385,1108 360,1102Z",
  "M448,1042L494,1034 494,1082 456,1120 456,1172 436,1186 428,1150 440,1115 432,1088 442,1068 452,1072 460,1096 454,1060Z",
  "M385,1108L420,1086 436,1092 440,1118 425,1150 402,1145 385,1118Z",
  "M286,1100L330,1104 385,1105 350,1110 352,1145 344,1150 344,1215 312,1210 302,1150Z",
  "M352,1112L385,1106 402,1145 425,1152 385,1188 352,1195 345,1150Z",
  "M318,1215L344,1215 350,1192 385,1188 422,1150 434,1160 436,1205 420,1235 392,1265 345,1278 332,1270 330,1240Z",
  "M396,1222L406,1215 414,1224 402,1234Z",
  "M557,1045L566,1078 556,1110 542,1172 530,1184 514,1176 514,1130 520,1095 542,1084Z",
];

const EAST_LIGHT = [
  "M148,325L178,322 168,340 184,348 178,362 194,372 200,384 212,388 196,402 178,402 162,412 178,396 164,386 180,378 164,368 170,358 156,345Z",
  "M132,368L148,350 158,366 152,390 122,394 132,384Z",
  "M250,378L272,368 276,376 303,375 304,400 290,408 296,430 260,436 248,420 244,400Z",
  "M166,428L188,424 212,404 240,418 256,422 250,440 246,456 250,470 222,490 188,482 192,455 180,438Z",
  // Russia
  "M412,212L440,210 490,225 500,238 485,248 450,245 455,262 472,270 490,255 498,240 515,235 525,222 535,240 560,228 600,226 648,210 695,225 685,205 700,185 715,174 728,190 722,215 738,218 752,185 780,192 800,205 790,182 830,175 825,160 870,150 940,148 975,132 1022,150 1015,165 965,180 1020,170 1130,174 1148,200 1165,190 1210,192 1220,178 1262,190 1300,195 1330,200 1358,198 1370,212 1430,218 1440,206 1505,216 1505,258 1470,262 1503,282 1460,290 1410,312 1382,320 1382,345 1352,378 1335,402 1328,345 1355,320 1380,310 1398,285 1350,292 1335,308 1300,318 1230,318 1206,340 1182,362 1202,366 1222,372 1220,410 1200,455 1170,480 1150,484 1152,462 1175,432 1142,430 1125,410 1110,382 1090,378 1070,382 1075,402 1042,412 1000,420 940,402 912,394 905,412 862,405 832,422 815,405 780,405 755,378 705,358 640,375 642,405 590,402 570,396 545,410 536,430 556,450 540,470 550,500 515,490 470,465 490,440 490,418 462,406 436,390 430,376 424,368 400,350 400,318 412,298 428,280 414,250Z",
  "M573,188L598,160 640,145 696,136 692,145 640,154 610,172 602,192 635,208 620,212 585,200Z",
  "M862,100L900,94 925,104 920,114 888,110Z",
  "M905,120L935,112 962,122 930,126Z",
  "M1185,152L1210,145 1250,152 1225,160Z",
  "M1252,152L1270,148 1296,155 1262,158Z",
  "M1222,375L1228,384 1240,382 1238,415 1248,458 1232,440 1230,405Z",
  // Vietnam
  "M940,695L958,686 972,696 974,712 964,728 984,756 993,785 990,808 966,830 958,818 978,802 984,776 960,735 956,715Z",
];

const CHINA = [
  "M735,520L752,512 778,496 785,465 802,460 804,444 825,440 832,422 856,438 858,460 885,468 895,485 930,488 962,498 1005,485 1010,466 1036,464 1045,452 1068,445 1062,432 1042,432 1044,415 1074,406 1070,382 1090,376 1110,382 1126,410 1140,414 1150,434 1175,432 1168,456 1152,462 1150,485 1130,492 1112,506 1088,520 1080,505 1052,526 1066,538 1088,542 1062,562 1072,584 1080,598 1078,625 1070,652 1045,685 1022,690 1000,704 985,700 968,686 955,684 948,694 925,702 910,682 916,658 908,632 885,645 870,636 840,640 800,620 772,602 770,572 752,556 750,540Z",
  "M988,722L1002,718 1000,734 990,736Z",
  "M1078,665L1083,672 1075,696 1070,685Z",
];

// archipelagos too small for a fill
const WEST_DOTS =
  "M88,395L130,390M158,382L192,368M170,378l10,-4M118,298l20,10M262,345l25,-12M229,697l8,2M245,706l8,4M256,712l6,4M236,884l2,0M249,903l3,1M382,1016l4,2M130,1060l8,5M142,1068l6,2M96,1370l8,2M622,1199l2,0M858,1266l3,1M1180,1474l22,12M760,932l8,-4M764,922l3,10M862,650l10,5M868,664l12,18M890,682l6,8M905,700l4,8M992,746l2,12M996,768l2,12M998,788l12,2M1232,518l5,2M1250,530l12,2M1270,535l6,2M1338,588l14,2M1332,632l10,4M1350,634l16,-2M1276,748l6,3M1284,768l12,-2M1403,197l6,-1M1414,288l8,-2M1460,305l4,10M410,314l30,20M420,330l28,22M440,370l10,14M460,366l16,14M820,282l8,4M850,288l5,4M852,350l6,-4M308,1104l6,0M152,344l3,2";
const EAST_DOTS =
  "M1262,474L1292,452M1296,448l10,-6M1400,358l8,6M1450,382l10,4M1488,391l16,0M1052,1010L1080,1008 1120,1004M1090,1028L1124,1010M1100,1018l16,-6M1060,842l24,-34M1094,830l10,12M1120,942l10,-4M1126,895l6,30M1136,930l8,4M1130,958l14,2M1168,985l6,-8M1150,1000l6,-4M905,895l20,34M892,888l8,10M960,940l10,6M1124,655l4,-6M1135,638l6,-8M1248,786l3,0M1255,768l3,0M1200,826l2,0M1175,845l2,0M1346,853l3,0M1290,940l4,2M1372,1020l4,6M1400,1040l8,2M66,632l12,4M84,632l16,-4M72,588l14,2M14,748l8,3M22,766l10,-1M134,197l8,-1M148,288l6,-2M188,306l4,10M586,796l6,-1M602,968l2,0M722,998l2,0M600,1136l4,6M614,1130l4,0M512,1040l14,14M250,905l4,-6M246,920l3,0M698,1414l10,14 4,-2M730,1465l6,1M572,1398l4,0M471,1402l1,0M1404,1442l2,0M158,1088l2,0M548,216l12,2M428,104l12,0M746,108l16,0M776,96l12,0M562,232l10,-6M790,166l10,-12M1190,140l12,4M1288,140l-4,14M1500,196l5,-4M216,520l10,-4M236,514l6,-2M380,524l16,10M400,556l14,8M78,790l24,4M84,800l20,2M1240,1320l30,6M1186,1284l14,-4M1020,1186l8,2M208,815l4,46M214,812l0,46";

function WorldMap() {
  return (
    <svg viewBox="-92 -166 1166 900" className="w-full" stroke="#c9c9c9" strokeWidth="1.2" strokeLinejoin="round" role="img" aria-label="世界地图">
      <g transform="scale(.33333 .33803)">
        <Shapes paths={WEST_PLAIN} fill="#f6f7f9" />
        <Shapes paths={WEST_LIGHT} fill="#effcfb" />
        <Shapes paths={USA} fill="#eaf8f7" />
        <Shapes paths={[WEST_DOTS]} fill="none" />
      </g>
      <g transform="translate(420 0) scale(.35714 .33803)">
        <Shapes paths={EAST_PLAIN} fill="#f6f7f9" />
        <Shapes paths={EAST_LIGHT} fill="#effcfb" />
        <Shapes paths={CHINA} fill="#5bc2c1" />
        <Shapes paths={[EAST_DOTS]} fill="none" />
      </g>
    </svg>
  );
}

function Shapes({ paths, fill }: { paths: string[]; fill: string }) {
  return paths.map((d, i) => <path key={i} d={d} fill={fill} vectorEffect="non-scaling-stroke" />);
}

/* ---------- icons ---------- */

function Logo({ className }: { className?: string }) {
  return (
    <svg viewBox="0 0 39 49" className={clsx("shrink-0", className)} fill="#5bc2c1">
      <path d="M3.500 12C7.500 12 11 10.500 14.400 8.700L7.500 22.700 17 23 9.500 41.300 30.300 16.500 22.400 14.700 32.300 0 31.300 9.500 38.300 12C40 30 29 43 14 48.500 3 43 -2 28 1.500 13Z" />
    </svg>
  );
}

function HexIcon() {
  return (
    <svg viewBox="0 0 22 24" className="h-6 w-[22px]">
      <path d="M11 0l11 6v12l-11 6-11-6V6z" fill="#5bc2c1" />
      <path d="M12.500 1L6 13.500h3.500L7 21.500M15 2.500L12.500 10H16L9.500 23" fill="none" stroke="#fff" strokeWidth="1.800" />
    </svg>
  );
}

function HistoryIcon() {
  return (
    <svg viewBox="0 0 32 32" className="h-8 w-8" fill="none" stroke="currentColor" strokeWidth="2.200" strokeLinecap="round" strokeLinejoin="round">
      <path d="M5 10A13 13 0 1 1 4 20M3 4v7h7M17 10v7l5 4" />
    </svg>
  );
}

function BarsIcon({ className }: { className?: string }) {
  return (
    <svg viewBox="0 0 32 32" className={className} fill="none" stroke="currentColor" strokeWidth="2.400">
      <path d="M1.200 30.800V12.500q0-1.500 1.500-1.500h3.600q1.500 0 1.500 1.500v18.300zM12.200 30.800V3q0-1.500 1.500-1.500h4.100q1.500 0 1.500 1.500v27.800zM23.700 30.800V18q0-1.500 1.500-1.500h4q1.500 0 1.500 1.500v12.800z" />
    </svg>
  );
}

function LogIcon() {
  return (
    <svg viewBox="0 0 32 32" className="h-8 w-8" fill="none" stroke="currentColor" strokeWidth="2.200" strokeLinecap="round">
      <path d="M28 12V3q0-2-2-2H4Q2 1 2 3v26q0 2 2 2h9M8 8h13M8 15h7" />
      <path d="M26 21A5.500 5.500 0 1 0 27.500 26" />
      <path d="M28 17.500l1.500 5-6 .5z" fill="currentColor" strokeWidth="1" />
    </svg>
  );
}

function ShieldIcon() {
  return (
    <svg viewBox="0 0 32 32" className="h-8 w-8" fill="none" stroke="currentColor" strokeWidth="2.200" strokeLinecap="round" strokeLinejoin="round">
      <path d="M16 1.500C12 4.500 8 5.500 3 5.500V16c0 7 5 12 13 15 8-3 13-8 13-15V5.500c-5 0-9-1-13-4z" />
      <path d="M11 16l4 4 7-6.500" />
    </svg>
  );
}

function ConfigIcon() {
  return (
    <svg viewBox="0 0 32 32" className="h-8 w-8" fill="none" stroke="currentColor" strokeWidth="2.200" strokeLinecap="round" strokeLinejoin="round">
      <path d="M24.500 3l-4 4.500.5 3 3.500.5 4.500-4c1 5-2 8.500-6.500 8-1 0-1.500 0-2.500 1L7.500 28c-3 3-6.500-.5-4-4L16 12c1-1 .8-2 .8-3C17 4.500 20 2 24.500 3z" />
      <path d="M3 6l3.500-3.500 5 4.500.5 4.500L7.500 11zM12 11.500l2.500 2.500M17.500 18.500l2 2M19.500 20.500c1-1.500 2.500-1.500 3.500-.5l4.500 5c2 2-1.500 5.500-3.500 3.500l-5-4.500c-1-1-1-2.500.5-3.500z" />
    </svg>
  );
}

function GearIcon() {
  return (
    <svg viewBox="0 0 32 32" className="h-8 w-8" fill="none" stroke="currentColor" strokeWidth="2.200" strokeLinecap="round" strokeLinejoin="round">
      <path d="M11 2c2 0 3 2 5 2s3-2 5-2c3 0 3.500 3 4 5 .8 2 3.500 1.800 4.500 3.500 1.800 3-1 3.500-1 5.500s2.800 3 1 5.500c-1 1.700-3.700 1.500-4.500 3.500-.5 2-1 5-4 5-2 0-3-2-5-2s-3 2-5 2c-3 0-3.500-3-4-5-.8-2-3.500-1.800-4.500-3.500-1.800-2.500 1-3.500 1-5.500s-2.800-2.500-1-5.500C3.500 8.800 6.200 9 7 7c.5-2 1-5 4-5z" />
      <path d="M21 17.500A5.200 5.200 0 1 0 15 21" />
    </svg>
  );
}

function BadgeIcon() {
  return (
    <svg viewBox="0 0 24 24" className="h-6 w-6">
      <path d="M12 .5C8.500 3 5 4 1 4v8c0 6 4.500 9.500 11 12 6.500-2.500 11-6 11-12V4c-4 0-7.500-1-11-3.500z" fill="#333" />
      <path d="M12 5l5 3h2v6c0 2-3 4-7 6-4-2-7-4-7-6V8h2z" fill="#4fb5b3" />
      <path d="M15 9.500H9.500L15 14.500H9" fill="none" stroke="#e8ffff" strokeWidth="1.800" />
    </svg>
  );
}

function HeadsetIcon() {
  return (
    <svg viewBox="0 0 24 24" className="h-6 w-6" fill="none" stroke="#000" strokeWidth="2" strokeLinecap="round">
      <path d="M3.500 10C4 4.500 7.500 2 12 2s8 2.500 8.500 8M20 16c-1 4-4 6-7.500 6" />
      <rect x="1" y="10" width="4" height="7" rx="2" />
      <rect x="19" y="10" width="4" height="7" rx="2" />
      <path d="M9 9.500v.5M15 9.500v.5" />
      <circle cx="12" cy="22" r="1.500" fill="#000" />
    </svg>
  );
}

function DocIcon() {
  return (
    <svg viewBox="0 0 24 24" className="h-6 w-6" fill="none" stroke="#000" strokeWidth="2" strokeLinecap="round" strokeLinejoin="round">
      <path d="M3 1h11l6 6v14q0 2-2 2H3q-2 0-2-2V3q0-2 2-2zM6 8h5M6 13h9M6 18h9" />
    </svg>
  );
}

function ToolsIcon() {
  return (
    <svg viewBox="0 0 24 24" className="h-6 w-6" fill="currentColor">
      <rect x="0" y="1" width="11" height="10" rx="2" />
      <rect x="0" y="13" width="11" height="10" rx="2" />
      <rect x="13" y="13" width="11" height="10" rx="2" />
      <path d="M18.500 1.500L23 6l-4.500 4.500L14 6z" fill="none" stroke="currentColor" strokeWidth="2.200" strokeLinejoin="round" />
    </svg>
  );
}

function GroupIcon() {
  return (
    <svg viewBox="0 0 26 26" className="h-[26px] w-[26px]" fill="currentColor">
      <circle cx="5" cy="4" r="3.500" />
      <circle cx="21" cy="4" r="3.500" />
      <circle cx="13" cy="9" r="5" />
      <path d="M0 13q0-5 5-5 1.500 0 2 1 0 4 2.500 5.500L6 16H2q-2 0-2-3zM26 13q0-5-5-5-1.500 0-2 1 0 4-2.500 5.500L20 16h4q2 0 2-3zM4 22q0-7 6-7h6q6 0 6 7 0 4-3 4H7q-3 0-3-4z" />
    </svg>
  );
}

function UserBadge() {
  return (
    <svg viewBox="0 0 32 32" className="h-8 w-8" fill="#5bc2c1">
      <circle cx="16" cy="16" r="16" fill="#ebf8f8" />
      <circle cx="16" cy="11" r="4.800" />
      <path d="M8 23q0-6 6-6h4q6 0 6 6 0 2-2 2H10q-2 0-2-2z" />
    </svg>
  );
}

function UsersBadge() {
  return (
    <svg viewBox="0 0 32 32" className="h-8 w-8" fill="#5bc2c1">
      <circle cx="16" cy="16" r="16" fill="#ebf8f8" />
      <circle cx="12.500" cy="12" r="4.200" />
      <circle cx="21" cy="12.500" r="3.400" />
      <path d="M6 24q0-7 6.500-7T19 24zM20 23q0-4-2-6 8-1.500 8 6z" />
    </svg>
  );
}

function TargetBadge() {
  return (
    <svg viewBox="0 0 32 32" className="h-8 w-8" fill="none" stroke="#5bc2c1" strokeWidth="2.600">
      <circle cx="16" cy="16" r="16" fill="#ebf8f8" stroke="none" />
      <path d="M12 24.500A9.500 9.500 0 1 1 20 24.500M13 20A5 5 0 1 1 19 20" />
      <circle cx="16" cy="16" r="2" fill="#5bc2c1" stroke="none" />
      <path d="M16 17l3 9h-6z" fill="#5bc2c1" stroke="none" />
    </svg>
  );
}

function IpBadge() {
  return (
    <span className="grid h-8 w-8 place-items-center rounded-full bg-[#fef8ee] text-xl leading-8 font-bold text-[#f7bf3f]">IP</span>
  );
}

function AlertBadge() {
  return (
    <svg viewBox="0 0 32 32" className="h-8 w-8" fill="#f2564d">
      <circle cx="16" cy="16" r="16" fill="#fdeeef" />
      <path d="M13.500 7.500q0-1.500 2.500-1.500t2.500 1.500L17.800 19q0 1-1.800 1t-1.800-1z" />
      <circle cx="16" cy="24" r="2.300" />
    </svg>
  );
}
